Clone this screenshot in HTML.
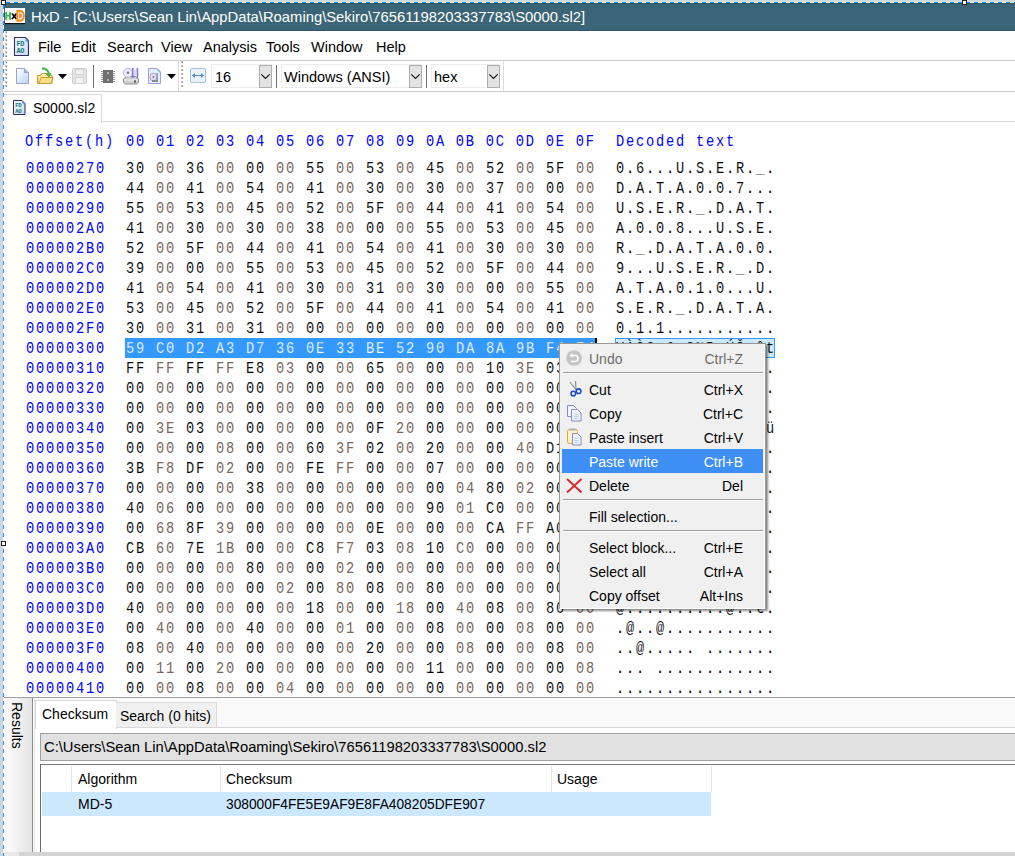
<!DOCTYPE html>
<html><head><meta charset="utf-8">
<style>
html,body{margin:0;padding:0}
body{width:1015px;height:856px;overflow:hidden;position:relative;background:#fff;font-family:"Liberation Sans",sans-serif;color:#000}
.abs{position:absolute}
.ui{position:absolute;font-family:"Liberation Sans",sans-serif;font-size:14.5px;line-height:20px;white-space:pre}
.mono{position:absolute;font-family:"Liberation Mono",monospace;font-size:16.667px;line-height:20px;white-space:pre;color:#000;-webkit-text-stroke:0.1px #fff;letter-spacing:2.195px;transform:scaleX(0.82);transform-origin:0 0;margin-left:1px}
.hdr,.off{color:#0000ff;-webkit-text-stroke:0}
.od{color:#7a675c;-webkit-text-stroke:0}
.ev{color:#000}
.dot{-webkit-text-stroke:0}
.sel{color:#fff;-webkit-text-stroke:0.25px #3399ff}
.mi{font-size:14px}
</style></head><body>
<!-- outer bg & dashed selection border -->
<div class="abs" style="left:0;top:0;width:1015px;height:2px;background:#d3d8df"></div>
<div class="abs" style="left:0;top:0;width:3px;height:856px;background:#cfd5de"></div>
<!-- title bar -->
<div class="abs" style="left:4px;top:3px;width:1011px;height:28px;background:#3b6576"></div>
<div class="ui" style="left:31px;top:7px;font-size:14.8px;color:#fff">HxD - [C:\Users\Sean Lin\AppData\Roaming\Sekiro\76561198203337783\S0000.sl2]</div>
<!-- menu bar -->
<div class="abs" style="left:4px;top:60px;width:1011px;height:1px;background:#cdcdcd"></div>
<div class="abs" style="left:4px;top:30px;width:1011px;height:1px;background:#2f5665"></div>
<div class="abs" style="left:4px;top:3px;width:1011px;height:1px;background:#2d5667"></div>
<div class="ui" style="left:38px;top:37px">File</div>
<div class="ui" style="left:71px;top:37px">Edit</div>
<div class="ui" style="left:107px;top:37px">Search</div>
<div class="ui" style="left:161px;top:37px">View</div>
<div class="ui" style="left:203px;top:37px">Analysis</div>
<div class="ui" style="left:266px;top:37px">Tools</div>
<div class="ui" style="left:311px;top:37px">Window</div>
<div class="ui" style="left:376px;top:37px">Help</div>
<!-- toolbar -->
<div class="abs" style="left:4px;top:91px;width:1011px;height:1px;background:#cdcdcd"></div>
<!-- combos -->
<div class="abs" style="left:211px;top:64px;width:59px;height:22px;border:1px solid #ececec;background:#fff"></div>
<div class="abs" style="left:259px;top:65px;width:11px;height:21px;border:1px solid #adadad;background:#e3e3e3"></div>
<div class="ui" style="left:215px;top:67px">16</div>
<div class="abs" style="left:276px;top:65px;width:1px;height:23px;background:#6e6e6e"></div>
<div class="abs" style="left:281px;top:64px;width:139px;height:22px;border:1px solid #ececec;background:#fff"></div>
<div class="abs" style="left:409px;top:65px;width:11px;height:21px;border:1px solid #adadad;background:#e3e3e3"></div>
<div class="ui" style="left:284px;top:67px">Windows (ANSI)</div>
<div class="abs" style="left:426px;top:65px;width:1px;height:23px;background:#6e6e6e"></div>
<div class="abs" style="left:431px;top:64px;width:67px;height:22px;border:1px solid #ececec;background:#fff"></div>
<div class="abs" style="left:487px;top:65px;width:11px;height:21px;border:1px solid #adadad;background:#e3e3e3"></div>
<div class="ui" style="left:434px;top:67px">hex</div>
<div class="abs" style="left:503px;top:61px;width:1px;height:30px;background:#dcdcdc"></div>
<div class="abs" style="left:178px;top:61px;width:1px;height:30px;background:#dcdcdc"></div>
<div class="abs" style="left:93px;top:65px;width:1px;height:23px;background:#6e6e6e"></div>
<svg class="abs" style="left:0;top:0" width="1015" height="130" viewBox="0 0 1015 130">
<defs>
<linearGradient id="gdoc" x1="0" y1="0" x2="1" y2="1"><stop offset="0" stop-color="#ffffff"/><stop offset="1" stop-color="#bcd6f2"/></linearGradient>
<linearGradient id="gfold" x1="0" y1="0" x2="0" y2="1"><stop offset="0" stop-color="#fff6c8"/><stop offset="1" stop-color="#f3cf6e"/></linearGradient>
<pattern id="grip" width="4" height="4" patternUnits="userSpaceOnUse"><rect x="0" y="1" width="2" height="2" fill="#9a9a9a"/></pattern>
</defs>
<!-- grippers -->
<rect x="5" y="31" width="2" height="2" fill="#c4c4c4"/><rect x="6" y="32" width="1" height="1" fill="#7c7c7c"/><rect x="5" y="35" width="2" height="2" fill="#c4c4c4"/><rect x="6" y="36" width="1" height="1" fill="#7c7c7c"/><rect x="5" y="39" width="2" height="2" fill="#c4c4c4"/><rect x="6" y="40" width="1" height="1" fill="#7c7c7c"/><rect x="5" y="43" width="2" height="2" fill="#c4c4c4"/><rect x="6" y="44" width="1" height="1" fill="#7c7c7c"/><rect x="5" y="47" width="2" height="2" fill="#c4c4c4"/><rect x="6" y="48" width="1" height="1" fill="#7c7c7c"/><rect x="5" y="51" width="2" height="2" fill="#c4c4c4"/><rect x="6" y="52" width="1" height="1" fill="#7c7c7c"/><rect x="5" y="55" width="2" height="2" fill="#c4c4c4"/><rect x="6" y="56" width="1" height="1" fill="#7c7c7c"/><rect x="5" y="61" width="2" height="2" fill="#c4c4c4"/><rect x="6" y="62" width="1" height="1" fill="#7c7c7c"/><rect x="5" y="65" width="2" height="2" fill="#c4c4c4"/><rect x="6" y="66" width="1" height="1" fill="#7c7c7c"/><rect x="5" y="69" width="2" height="2" fill="#c4c4c4"/><rect x="6" y="70" width="1" height="1" fill="#7c7c7c"/><rect x="5" y="73" width="2" height="2" fill="#c4c4c4"/><rect x="6" y="74" width="1" height="1" fill="#7c7c7c"/><rect x="5" y="77" width="2" height="2" fill="#c4c4c4"/><rect x="6" y="78" width="1" height="1" fill="#7c7c7c"/><rect x="5" y="81" width="2" height="2" fill="#c4c4c4"/><rect x="6" y="82" width="1" height="1" fill="#7c7c7c"/><rect x="5" y="85" width="2" height="2" fill="#c4c4c4"/><rect x="6" y="86" width="1" height="1" fill="#7c7c7c"/><rect x="181" y="61" width="2" height="2" fill="#c4c4c4"/><rect x="182" y="62" width="1" height="1" fill="#7c7c7c"/><rect x="181" y="65" width="2" height="2" fill="#c4c4c4"/><rect x="182" y="66" width="1" height="1" fill="#7c7c7c"/><rect x="181" y="69" width="2" height="2" fill="#c4c4c4"/><rect x="182" y="70" width="1" height="1" fill="#7c7c7c"/><rect x="181" y="73" width="2" height="2" fill="#c4c4c4"/><rect x="182" y="74" width="1" height="1" fill="#7c7c7c"/><rect x="181" y="77" width="2" height="2" fill="#c4c4c4"/><rect x="182" y="78" width="1" height="1" fill="#7c7c7c"/><rect x="181" y="81" width="2" height="2" fill="#c4c4c4"/><rect x="182" y="82" width="1" height="1" fill="#7c7c7c"/><rect x="181" y="85" width="2" height="2" fill="#c4c4c4"/><rect x="182" y="86" width="1" height="1" fill="#7c7c7c"/>
<!-- menu doc icon -->
<linearGradient id="gmd" x1="0" y1="0" x2="1" y2="1"><stop offset="0" stop-color="#f4f8ff"/><stop offset="1" stop-color="#c9dcf6"/></linearGradient>
<path d="M14.5 37.5 h11 l3 3 v15 h-14 z" fill="url(#gmd)" stroke="#2d2f5c" stroke-width="1.1"/>
<path d="M25.5 37.5 l3 3 v3 l-3 -3 z" fill="#5b8fe0"/>
<text x="16.6" y="46" font-family="Liberation Mono" font-size="6.8" font-weight="bold" fill="#107a78" letter-spacing="-0.3">FD</text>
<text x="16.6" y="53" font-family="Liberation Mono" font-size="6.8" font-weight="bold" fill="#107a78" letter-spacing="-0.3">AO</text>
<!-- new -->
<path d="M16.5 68.5 h8 l4 4 v11 h-12 z" fill="url(#gdoc)" stroke="#9c9fd8" stroke-width="1"/>
<path d="M24.5 68.5 v4 h4" fill="#9ec6ee" stroke="#9c9fd8" stroke-width="1"/>
<!-- open -->
<path d="M37.5 75.5 h3 l1.5 -2 h4 l1 2 h5 v8 h-14.5 z" fill="url(#gfold)" stroke="#d39a2c" stroke-width="1"/>
<path d="M39 83.5 l2 -6 h12 l-2 6 z" fill="#f9df8a" stroke="#d39a2c" stroke-width="1"/>
<path d="M42 68.5 q5 -0.5 7 5" fill="none" stroke="#3cb43c" stroke-width="2"/>
<path d="M45.5 73 l6 0 l-2.5 5 z" fill="#46bf46"/>
<path d="M58 74 h9 l-4.5 5 z" fill="#000"/>
<!-- save disabled -->
<rect x="72.5" y="68.5" width="14" height="15" rx="1.5" fill="#e6e6e6" stroke="#cfcfcf"/>
<rect x="75.5" y="69.5" width="8" height="5" fill="#f2f2f2" stroke="#d4d4d4"/>
<rect x="75.5" y="77.5" width="8" height="6" fill="#f4f4f4" stroke="#d4d4d4"/>
<!-- chip -->
<rect x="103" y="70" width="10" height="13" fill="#6f6f6f"/>
<path d="M101 71.5 h2 M101 73.5 h2 M101 75.5 h2 M101 77.5 h2 M101 79.5 h2 M101 81.5 h2 M113 71.5 h2 M113 73.5 h2 M113 75.5 h2 M113 77.5 h2 M113 79.5 h2 M113 81.5 h2" stroke="#9a9a9a" stroke-width="1"/>
<rect x="107" y="72" width="2" height="2" fill="#b0b0b0"/><rect x="107" y="79" width="2" height="2" fill="#b0b0b0"/>
<!-- drive -->
<path d="M123.5 79 l3 -2.5 h9 l3 2.5 v3.5 l-2 1.5 h-11 l-2 -1.5 z" fill="#cfcfcf" stroke="#8a8a8a" stroke-width="1"/>
<path d="M124 80 h14" stroke="#f4f4f4" stroke-width="1"/>
<rect x="134" y="80.5" width="2" height="2" fill="#555"/>
<circle cx="128" cy="72.8" r="4.6" fill="#eceaf8" stroke="#b9b4dc" stroke-width="1"/>
<circle cx="128" cy="72.8" r="1.2" fill="#707070"/>
<rect x="132" y="68" width="1.6" height="10" fill="#7a72d8"/>
<rect x="136.6" y="68" width="1.6" height="10" fill="#7a72d8"/>
<rect x="133.6" y="70" width="3" height="6" fill="#ddd9f2"/>
<!-- doc disk -->
<path d="M148.5 68.5 h8.5 l3.5 3.5 v11.5 h-12 z" fill="#e2f0fb" stroke="#9f9ee0" stroke-width="1"/>
<path d="M157 68.5 l3.5 3.5 v1.5 l-3.5 -3.5 z" fill="#62b0f0"/>
<circle cx="153.5" cy="77" r="3.8" fill="#e0ddea" stroke="#aaa5cc" stroke-width="1"/>
<circle cx="153.5" cy="77" r="0.9" fill="#777"/>
<rect x="156.5" y="73" width="1.3" height="7" fill="#8d86d8"/>
<rect x="152" y="80" width="6" height="2" fill="#8a8a8a"/>
<path d="M167 74 h9 l-4.5 5 z" fill="#000"/>
<!-- width icon -->
<rect x="190.5" y="68.5" width="15" height="14" rx="1.5" fill="#eaf2fb" stroke="#a6c0de" stroke-width="1"/>
<path d="M192.5 75.5 h11" stroke="#5b86c3" stroke-width="1"/>
<path d="M192 75.5 l3 -2.5 v5 z M204 75.5 l-3 -2.5 v5 z" fill="#5b86c3"/>
<!-- chevrons -->
<path d="M261.3 74.3 l4.2 4.2 l4.2 -4.2" fill="none" stroke="#111" stroke-width="1.1"/>
<path d="M411.3 74.3 l4.2 4.2 l4.2 -4.2" fill="none" stroke="#111" stroke-width="1.1"/>
<path d="M489.3 74.3 l4.2 4.2 l4.2 -4.2" fill="none" stroke="#111" stroke-width="1.1"/>
<!-- title icon -->
<rect x="5" y="8" width="20" height="15" fill="#fff"/>
<rect x="5" y="23" width="20" height="1.2" fill="#111"/>
<path d="M5.2 12 h2 v7.8 h-2 z M9 12 h2 v7.8 h-2 z M6.5 15 h3.5 v1.6 h-3.5 z" fill="#3fb64e"/>
<path d="M12 13.5 L16.5 19 M16.5 13.5 L12 19" stroke="#000" stroke-width="1.8"/>
<path d="M16.3 10 h4.2 a4.3 5.8 0 0 1 0 11.7 h-4.2 z" fill="#f08a14"/>
<path d="M18.2 12.3 h2.2 a2.6 3.5 0 0 1 0 7.1 h-2.2 z" fill="#eaf2fb"/>
<path d="M19.2 13.6 h1.2 a1.6 2.2 0 0 1 0 4.4 h-1.2 z" fill="#f58a1c"/>
</svg>
<!-- tab -->
<div class="abs" style="left:4px;top:94px;width:97px;height:28px;border-top:1px solid #d9d9d9;border-right:1px solid #d9d9d9;background:#fff"></div>
<div class="abs" style="left:101px;top:121px;width:914px;height:1px;background:#d9d9d9"></div>
<div class="ui" style="left:33px;top:98px;font-size:14px">S0000.sl2</div>
<svg class="abs" style="left:0;top:0" width="130" height="130" viewBox="0 0 130 130"><!-- tab icon -->
<path d="M13.5 100.5 h8.5 l3 3 v11 h-11.5 z" fill="url(#gtab)" stroke="#2d2f5c" stroke-width="1"/>
<linearGradient id="gtab" x1="0" y1="0" x2="1" y2="1"><stop offset="0" stop-color="#f4f8ff"/><stop offset="1" stop-color="#c9dcf6"/></linearGradient>
<path d="M22 100.5 l3 3 v2 l-3 -3 z" fill="#5b8fe0"/>
<text x="15.2" y="107.3" font-family="Liberation Mono" font-size="5.6" font-weight="bold" fill="#107a78" letter-spacing="-0.2">FD</text>
<text x="15.2" y="113" font-family="Liberation Mono" font-size="5.6" font-weight="bold" fill="#107a78" letter-spacing="-0.2">AO</text>
</svg>
<!-- hex -->
<div class="mono hdr" style="left:24px;top:132px">Offset(h)</div>
<div class="mono hdr" style="left:125px;top:132px">00 01 02 03 04 05 06 07 08 09 0A 0B 0C 0D 0E 0F</div>
<div class="mono hdr" style="left:615px;top:132px">Decoded text</div>
<div class="mono off" style="left:25px;top:159px">00000270</div>
<div class="mono" style="left:125px;top:159px"><span class="ev">30</span> <span class="od">00</span> <span class="ev">36</span> <span class="od">00</span> <span class="ev">00</span> <span class="od">00</span> <span class="ev">55</span> <span class="od">00</span> <span class="ev">53</span> <span class="od">00</span> <span class="ev">45</span> <span class="od">00</span> <span class="ev">52</span> <span class="od">00</span> <span class="ev">5F</span> <span class="od">00</span></div>
<div class="mono" style="left:615px;top:159px">0<span class="dot">.</span>6<span class="dot">...</span>U<span class="dot">.</span>S<span class="dot">.</span>E<span class="dot">.</span>R<span class="dot">.</span>_<span class="dot">.</span></div>
<div class="mono off" style="left:25px;top:179px">00000280</div>
<div class="mono" style="left:125px;top:179px"><span class="ev">44</span> <span class="od">00</span> <span class="ev">41</span> <span class="od">00</span> <span class="ev">54</span> <span class="od">00</span> <span class="ev">41</span> <span class="od">00</span> <span class="ev">30</span> <span class="od">00</span> <span class="ev">30</span> <span class="od">00</span> <span class="ev">37</span> <span class="od">00</span> <span class="ev">00</span> <span class="od">00</span></div>
<div class="mono" style="left:615px;top:179px">D<span class="dot">.</span>A<span class="dot">.</span>T<span class="dot">.</span>A<span class="dot">.</span>0<span class="dot">.</span>0<span class="dot">.</span>7<span class="dot">...</span></div>
<div class="mono off" style="left:25px;top:199px">00000290</div>
<div class="mono" style="left:125px;top:199px"><span class="ev">55</span> <span class="od">00</span> <span class="ev">53</span> <span class="od">00</span> <span class="ev">45</span> <span class="od">00</span> <span class="ev">52</span> <span class="od">00</span> <span class="ev">5F</span> <span class="od">00</span> <span class="ev">44</span> <span class="od">00</span> <span class="ev">41</span> <span class="od">00</span> <span class="ev">54</span> <span class="od">00</span></div>
<div class="mono" style="left:615px;top:199px">U<span class="dot">.</span>S<span class="dot">.</span>E<span class="dot">.</span>R<span class="dot">.</span>_<span class="dot">.</span>D<span class="dot">.</span>A<span class="dot">.</span>T<span class="dot">.</span></div>
<div class="mono off" style="left:25px;top:219px">000002A0</div>
<div class="mono" style="left:125px;top:219px"><span class="ev">41</span> <span class="od">00</span> <span class="ev">30</span> <span class="od">00</span> <span class="ev">30</span> <span class="od">00</span> <span class="ev">38</span> <span class="od">00</span> <span class="ev">00</span> <span class="od">00</span> <span class="ev">55</span> <span class="od">00</span> <span class="ev">53</span> <span class="od">00</span> <span class="ev">45</span> <span class="od">00</span></div>
<div class="mono" style="left:615px;top:219px">A<span class="dot">.</span>0<span class="dot">.</span>0<span class="dot">.</span>8<span class="dot">...</span>U<span class="dot">.</span>S<span class="dot">.</span>E<span class="dot">.</span></div>
<div class="mono off" style="left:25px;top:239px">000002B0</div>
<div class="mono" style="left:125px;top:239px"><span class="ev">52</span> <span class="od">00</span> <span class="ev">5F</span> <span class="od">00</span> <span class="ev">44</span> <span class="od">00</span> <span class="ev">41</span> <span class="od">00</span> <span class="ev">54</span> <span class="od">00</span> <span class="ev">41</span> <span class="od">00</span> <span class="ev">30</span> <span class="od">00</span> <span class="ev">30</span> <span class="od">00</span></div>
<div class="mono" style="left:615px;top:239px">R<span class="dot">.</span>_<span class="dot">.</span>D<span class="dot">.</span>A<span class="dot">.</span>T<span class="dot">.</span>A<span class="dot">.</span>0<span class="dot">.</span>0<span class="dot">.</span></div>
<div class="mono off" style="left:25px;top:259px">000002C0</div>
<div class="mono" style="left:125px;top:259px"><span class="ev">39</span> <span class="od">00</span> <span class="ev">00</span> <span class="od">00</span> <span class="ev">55</span> <span class="od">00</span> <span class="ev">53</span> <span class="od">00</span> <span class="ev">45</span> <span class="od">00</span> <span class="ev">52</span> <span class="od">00</span> <span class="ev">5F</span> <span class="od">00</span> <span class="ev">44</span> <span class="od">00</span></div>
<div class="mono" style="left:615px;top:259px">9<span class="dot">...</span>U<span class="dot">.</span>S<span class="dot">.</span>E<span class="dot">.</span>R<span class="dot">.</span>_<span class="dot">.</span>D<span class="dot">.</span></div>
<div class="mono off" style="left:25px;top:279px">000002D0</div>
<div class="mono" style="left:125px;top:279px"><span class="ev">41</span> <span class="od">00</span> <span class="ev">54</span> <span class="od">00</span> <span class="ev">41</span> <span class="od">00</span> <span class="ev">30</span> <span class="od">00</span> <span class="ev">31</span> <span class="od">00</span> <span class="ev">30</span> <span class="od">00</span> <span class="ev">00</span> <span class="od">00</span> <span class="ev">55</span> <span class="od">00</span></div>
<div class="mono" style="left:615px;top:279px">A<span class="dot">.</span>T<span class="dot">.</span>A<span class="dot">.</span>0<span class="dot">.</span>1<span class="dot">.</span>0<span class="dot">...</span>U<span class="dot">.</span></div>
<div class="mono off" style="left:25px;top:299px">000002E0</div>
<div class="mono" style="left:125px;top:299px"><span class="ev">53</span> <span class="od">00</span> <span class="ev">45</span> <span class="od">00</span> <span class="ev">52</span> <span class="od">00</span> <span class="ev">5F</span> <span class="od">00</span> <span class="ev">44</span> <span class="od">00</span> <span class="ev">41</span> <span class="od">00</span> <span class="ev">54</span> <span class="od">00</span> <span class="ev">41</span> <span class="od">00</span></div>
<div class="mono" style="left:615px;top:299px">S<span class="dot">.</span>E<span class="dot">.</span>R<span class="dot">.</span>_<span class="dot">.</span>D<span class="dot">.</span>A<span class="dot">.</span>T<span class="dot">.</span>A<span class="dot">.</span></div>
<div class="mono off" style="left:25px;top:319px">000002F0</div>
<div class="mono" style="left:125px;top:319px"><span class="ev">30</span> <span class="od">00</span> <span class="ev">31</span> <span class="od">00</span> <span class="ev">31</span> <span class="od">00</span> <span class="ev">00</span> <span class="od">00</span> <span class="ev">00</span> <span class="od">00</span> <span class="ev">00</span> <span class="od">00</span> <span class="ev">00</span> <span class="od">00</span> <span class="ev">00</span> <span class="od">00</span></div>
<div class="mono" style="left:615px;top:319px">0<span class="dot">.</span>1<span class="dot">.</span>1<span class="dot">...........</span></div>
<div class="abs" style="left:125px;top:338px;width:470px;height:20px;background:#3399ff"></div>
<div class="abs" style="left:595px;top:338px;width:2px;height:20px;background:#000"></div>
<div class="abs" style="left:615px;top:338px;width:158px;height:18px;background:#cce8ff;border:1px solid #3399ff"></div>
<div class="mono off" style="left:25px;top:339px">00000300</div>
<div class="mono" style="left:125px;top:339px"><span class="sel">59</span> <span class="sel">C0</span> <span class="sel">D2</span> <span class="sel">A3</span> <span class="sel">D7</span> <span class="sel">36</span> <span class="sel">0E</span> <span class="sel">33</span> <span class="sel">BE</span> <span class="sel">52</span> <span class="sel">90</span> <span class="sel">DA</span> <span class="sel">8A</span> <span class="sel">9B</span> <span class="sel">F4</span> <span class="sel">74</span></div>
<div class="mono" style="left:615px;top:339px">YÀÒ£×6<span class="dot">.</span>3¾R<span class="dot">.</span>ÚŠ›ôt</div>
<div class="mono off" style="left:25px;top:359px">00000310</div>
<div class="mono" style="left:125px;top:359px"><span class="ev">FF</span> <span class="od">FF</span> <span class="ev">FF</span> <span class="od">FF</span> <span class="ev">E8</span> <span class="od">03</span> <span class="ev">00</span> <span class="od">00</span> <span class="ev">65</span> <span class="od">00</span> <span class="ev">00</span> <span class="od">00</span> <span class="ev">10</span> <span class="od">3E</span> <span class="ev">03</span> <span class="od">00</span></div>
<div class="mono" style="left:615px;top:359px">ÿÿÿÿè<span class="dot">...</span>e<span class="dot">....</span>&gt;<span class="dot">..</span></div>
<div class="mono off" style="left:25px;top:379px">00000320</div>
<div class="mono" style="left:125px;top:379px"><span class="ev">00</span> <span class="od">00</span> <span class="ev">00</span> <span class="od">00</span> <span class="ev">00</span> <span class="od">00</span> <span class="ev">00</span> <span class="od">00</span> <span class="ev">00</span> <span class="od">00</span> <span class="ev">00</span> <span class="od">00</span> <span class="ev">00</span> <span class="od">00</span> <span class="ev">00</span> <span class="od">00</span></div>
<div class="mono" style="left:615px;top:379px"><span class="dot">................</span></div>
<div class="mono off" style="left:25px;top:399px">00000330</div>
<div class="mono" style="left:125px;top:399px"><span class="ev">00</span> <span class="od">00</span> <span class="ev">00</span> <span class="od">00</span> <span class="ev">00</span> <span class="od">00</span> <span class="ev">00</span> <span class="od">00</span> <span class="ev">00</span> <span class="od">00</span> <span class="ev">00</span> <span class="od">00</span> <span class="ev">00</span> <span class="od">00</span> <span class="ev">00</span> <span class="od">00</span></div>
<div class="mono" style="left:615px;top:399px"><span class="dot">................</span></div>
<div class="mono off" style="left:25px;top:419px">00000340</div>
<div class="mono" style="left:125px;top:419px"><span class="ev">00</span> <span class="od">3E</span> <span class="ev">03</span> <span class="od">00</span> <span class="ev">00</span> <span class="od">00</span> <span class="ev">00</span> <span class="od">00</span> <span class="ev">0F</span> <span class="od">20</span> <span class="ev">00</span> <span class="od">00</span> <span class="ev">00</span> <span class="od">00</span> <span class="ev">00</span> <span class="od">FC</span></div>
<div class="mono" style="left:615px;top:419px"><span class="dot">.</span>&gt;<span class="dot">......</span> <span class="dot">......</span>ü</div>
<div class="mono off" style="left:25px;top:439px">00000350</div>
<div class="mono" style="left:125px;top:439px"><span class="ev">00</span> <span class="od">00</span> <span class="ev">00</span> <span class="od">08</span> <span class="ev">00</span> <span class="od">00</span> <span class="ev">60</span> <span class="od">3F</span> <span class="ev">02</span> <span class="od">00</span> <span class="ev">20</span> <span class="od">00</span> <span class="ev">00</span> <span class="od">40</span> <span class="ev">D1</span> <span class="od">00</span></div>
<div class="mono" style="left:615px;top:439px"><span class="dot">......</span>`?<span class="dot">..</span> <span class="dot">..</span>@Ñ<span class="dot">.</span></div>
<div class="mono off" style="left:25px;top:459px">00000360</div>
<div class="mono" style="left:125px;top:459px"><span class="ev">3B</span> <span class="od">F8</span> <span class="ev">DF</span> <span class="od">02</span> <span class="ev">00</span> <span class="od">00</span> <span class="ev">FE</span> <span class="od">FF</span> <span class="ev">00</span> <span class="od">00</span> <span class="ev">07</span> <span class="od">00</span> <span class="ev">00</span> <span class="od">00</span> <span class="ev">00</span> <span class="od">00</span></div>
<div class="mono" style="left:615px;top:459px">;øß<span class="dot">...</span>þÿ<span class="dot">........</span></div>
<div class="mono off" style="left:25px;top:479px">00000370</div>
<div class="mono" style="left:125px;top:479px"><span class="ev">00</span> <span class="od">00</span> <span class="ev">00</span> <span class="od">00</span> <span class="ev">38</span> <span class="od">00</span> <span class="ev">00</span> <span class="od">00</span> <span class="ev">00</span> <span class="od">00</span> <span class="ev">00</span> <span class="od">04</span> <span class="ev">80</span> <span class="od">02</span> <span class="ev">00</span> <span class="od">00</span></div>
<div class="mono" style="left:615px;top:479px"><span class="dot">....</span>8<span class="dot">.......</span>€<span class="dot">...</span></div>
<div class="mono off" style="left:25px;top:499px">00000380</div>
<div class="mono" style="left:125px;top:499px"><span class="ev">40</span> <span class="od">06</span> <span class="ev">00</span> <span class="od">00</span> <span class="ev">00</span> <span class="od">00</span> <span class="ev">00</span> <span class="od">00</span> <span class="ev">00</span> <span class="od">00</span> <span class="ev">90</span> <span class="od">01</span> <span class="ev">C0</span> <span class="od">00</span> <span class="ev">00</span> <span class="od">00</span></div>
<div class="mono" style="left:615px;top:499px">@<span class="dot">.........</span>À<span class="dot">.....</span></div>
<div class="mono off" style="left:25px;top:519px">00000390</div>
<div class="mono" style="left:125px;top:519px"><span class="ev">00</span> <span class="od">68</span> <span class="ev">8F</span> <span class="od">39</span> <span class="ev">00</span> <span class="od">00</span> <span class="ev">00</span> <span class="od">00</span> <span class="ev">0E</span> <span class="od">00</span> <span class="ev">00</span> <span class="od">00</span> <span class="ev">CA</span> <span class="od">FF</span> <span class="ev">A0</span> <span class="od">00</span></div>
<div class="mono" style="left:615px;top:519px"><span class="dot">.</span>h<span class="dot">.</span>9<span class="dot">........</span>Êÿ <span class="dot">.</span></div>
<div class="mono off" style="left:25px;top:539px">000003A0</div>
<div class="mono" style="left:125px;top:539px"><span class="ev">CB</span> <span class="od">60</span> <span class="ev">7E</span> <span class="od">1B</span> <span class="ev">00</span> <span class="od">00</span> <span class="ev">C8</span> <span class="od">F7</span> <span class="ev">03</span> <span class="od">08</span> <span class="ev">10</span> <span class="od">C0</span> <span class="ev">00</span> <span class="od">00</span> <span class="ev">00</span> <span class="od">00</span></div>
<div class="mono" style="left:615px;top:539px">Ë`~<span class="dot">...</span>È÷<span class="dot">...</span>À<span class="dot">....</span></div>
<div class="mono off" style="left:25px;top:559px">000003B0</div>
<div class="mono" style="left:125px;top:559px"><span class="ev">00</span> <span class="od">00</span> <span class="ev">00</span> <span class="od">00</span> <span class="ev">80</span> <span class="od">00</span> <span class="ev">00</span> <span class="od">02</span> <span class="ev">00</span> <span class="od">00</span> <span class="ev">00</span> <span class="od">00</span> <span class="ev">00</span> <span class="od">00</span> <span class="ev">00</span> <span class="od">00</span></div>
<div class="mono" style="left:615px;top:559px"><span class="dot">....</span>€<span class="dot">...........</span></div>
<div class="mono off" style="left:25px;top:579px">000003C0</div>
<div class="mono" style="left:125px;top:579px"><span class="ev">00</span> <span class="od">00</span> <span class="ev">00</span> <span class="od">00</span> <span class="ev">00</span> <span class="od">02</span> <span class="ev">00</span> <span class="od">80</span> <span class="ev">08</span> <span class="od">00</span> <span class="ev">80</span> <span class="od">00</span> <span class="ev">00</span> <span class="od">00</span> <span class="ev">00</span> <span class="od">00</span></div>
<div class="mono" style="left:615px;top:579px"><span class="dot">.......</span>€<span class="dot">..</span>€<span class="dot">.....</span></div>
<div class="mono off" style="left:25px;top:599px">000003D0</div>
<div class="mono" style="left:125px;top:599px"><span class="ev">40</span> <span class="od">00</span> <span class="ev">00</span> <span class="od">00</span> <span class="ev">00</span> <span class="od">00</span> <span class="ev">18</span> <span class="od">00</span> <span class="ev">00</span> <span class="od">18</span> <span class="ev">00</span> <span class="od">40</span> <span class="ev">08</span> <span class="od">00</span> <span class="ev">80</span> <span class="od">00</span></div>
<div class="mono" style="left:615px;top:599px">@<span class="dot">..........</span>@<span class="dot">..</span>€<span class="dot">.</span></div>
<div class="mono off" style="left:25px;top:619px">000003E0</div>
<div class="mono" style="left:125px;top:619px"><span class="ev">00</span> <span class="od">40</span> <span class="ev">00</span> <span class="od">00</span> <span class="ev">40</span> <span class="od">00</span> <span class="ev">00</span> <span class="od">01</span> <span class="ev">00</span> <span class="od">00</span> <span class="ev">08</span> <span class="od">00</span> <span class="ev">00</span> <span class="od">08</span> <span class="ev">00</span> <span class="od">00</span></div>
<div class="mono" style="left:615px;top:619px"><span class="dot">.</span>@<span class="dot">..</span>@<span class="dot">...........</span></div>
<div class="mono off" style="left:25px;top:639px">000003F0</div>
<div class="mono" style="left:125px;top:639px"><span class="ev">08</span> <span class="od">00</span> <span class="ev">40</span> <span class="od">00</span> <span class="ev">00</span> <span class="od">00</span> <span class="ev">00</span> <span class="od">00</span> <span class="ev">20</span> <span class="od">00</span> <span class="ev">00</span> <span class="od">08</span> <span class="ev">00</span> <span class="od">00</span> <span class="ev">08</span> <span class="od">00</span></div>
<div class="mono" style="left:615px;top:639px"><span class="dot">..</span>@<span class="dot">.....</span> <span class="dot">.......</span></div>
<div class="mono off" style="left:25px;top:659px">00000400</div>
<div class="mono" style="left:125px;top:659px"><span class="ev">00</span> <span class="od">11</span> <span class="ev">00</span> <span class="od">20</span> <span class="ev">00</span> <span class="od">00</span> <span class="ev">00</span> <span class="od">00</span> <span class="ev">00</span> <span class="od">00</span> <span class="ev">11</span> <span class="od">00</span> <span class="ev">00</span> <span class="od">00</span> <span class="ev">00</span> <span class="od">08</span></div>
<div class="mono" style="left:615px;top:659px"><span class="dot">...</span> <span class="dot">............</span></div>
<div class="mono off" style="left:25px;top:679px">00000410</div>
<div class="mono" style="left:125px;top:679px"><span class="ev">00</span> <span class="od">00</span> <span class="ev">08</span> <span class="od">00</span> <span class="ev">00</span> <span class="od">04</span> <span class="ev">00</span> <span class="od">00</span> <span class="ev">00</span> <span class="od">00</span> <span class="ev">00</span> <span class="od">00</span> <span class="ev">00</span> <span class="od">00</span> <span class="ev">00</span> <span class="od">00</span></div>
<div class="mono" style="left:615px;top:679px"><span class="dot">................</span></div>
<!-- hex bottom line -->
<div class="abs" style="left:4px;top:697px;width:1011px;height:1px;background:#a0a0a0"></div>
<!-- results panel -->
<div class="abs" style="left:4px;top:698px;width:1011px;height:154px;background:#fff"></div>
<div class="abs" style="left:4px;top:698px;width:28px;height:154px;background:linear-gradient(90deg,#ffffff,#e3e3e3)"></div>
<div class="abs" style="left:32px;top:698px;width:1px;height:154px;background:#8c8c8c"></div>
<div class="abs" style="left:34px;top:698px;width:1px;height:154px;background:#e8e8e8"></div>
<div class="ui" style="left:-6px;top:715px;width:46px;transform:rotate(90deg);transform-origin:center;font-size:14px;text-align:center">Results</div>
<div class="abs" style="left:35px;top:698px;width:980px;height:29px;background:#f9f9f9"></div>
<div class="abs" style="left:35px;top:727px;width:980px;height:1px;background:#d6d6d6"></div>
<div class="abs" style="left:35px;top:700px;width:80px;height:28px;border:1px solid #d9d9d9;border-bottom:none;background:#fff"></div>
<div class="abs" style="left:116px;top:702px;width:100px;height:24px;border:1px solid #d9d9d9;border-left:none;background:#f0f0f0"></div>
<div class="ui mi" style="left:42px;top:704px">Checksum</div>
<div class="ui mi" style="left:120px;top:706px">Search (0 hits)</div>
<div class="abs" style="left:40px;top:733px;width:975px;height:26px;border-top:1px solid #a0a0a0;border-bottom:1px solid #a0a0a0;border-left:1px solid #a0a0a0;background:#e1e1e1"></div>
<div class="ui mi" style="left:44px;top:737px;font-size:14.75px">C:\Users\Sean Lin\AppData\Roaming\Sekiro\76561198203337783\S0000.sl2</div>
<div class="abs" style="left:40px;top:764px;width:975px;height:88px;border-top:1px solid #7a7a7a;border-left:1px solid #6a6a6a;background:#fff"></div>
<div class="abs" style="left:71px;top:766px;width:1px;height:26px;background:#e5e5e5"></div>
<div class="abs" style="left:220px;top:766px;width:1px;height:26px;background:#e5e5e5"></div>
<div class="abs" style="left:551px;top:766px;width:1px;height:26px;background:#e5e5e5"></div>
<div class="abs" style="left:711px;top:766px;width:1px;height:26px;background:#e5e5e5"></div>
<div class="abs" style="left:42px;top:792px;width:669px;height:24px;background:#cce8ff"></div>
<div class="ui mi" style="left:78px;top:769px">Algorithm</div>
<div class="ui mi" style="left:226px;top:769px">Checksum</div>
<div class="ui mi" style="left:557px;top:769px">Usage</div>
<div class="ui mi" style="left:78px;top:794px">MD-5</div>
<div class="ui mi" style="left:226px;top:795px;font-size:13.75px">308000F4FE5E9AF9E8FA408205DFE907</div>
<div class="abs" style="left:4px;top:852px;width:15px;height:4px;background:#e8e8e8"></div>
<div class="abs" style="left:19px;top:852px;width:996px;height:4px;background:#d4d4d4"></div>

<!-- context menu -->
<div class="abs" style="left:559px;top:343px;width:205px;height:264px;border:1px solid #979797;background:#f0f0f0;box-shadow:2px 2px 2px rgba(0,0,0,0.45)"></div>
<div class="abs" style="left:560px;top:344px;width:204px;height:264px;border-right:1px solid #fff;border-bottom:1px solid #fff"></div>
<div class="abs" style="left:562px;top:449px;width:201px;height:24px;background:#3d8ff5"></div>
<div class="abs" style="left:563px;top:372px;width:200px;height:1px;background:#a0a0a0"></div>
<div class="abs" style="left:563px;top:373px;width:200px;height:1px;background:#fff"></div>
<div class="abs" style="left:563px;top:499px;width:200px;height:1px;background:#a0a0a0"></div>
<div class="abs" style="left:563px;top:500px;width:200px;height:1px;background:#fff"></div>
<div class="abs" style="left:563px;top:530px;width:200px;height:1px;background:#a0a0a0"></div>
<div class="abs" style="left:563px;top:531px;width:200px;height:1px;background:#fff"></div>
<div class="ui mi" style="left:589px;top:349px;color:#6d6d6d">Undo</div>
<div class="ui mi" style="left:643px;width:100px;text-align:right;top:349px;color:#6d6d6d">Ctrl+Z</div>
<div class="ui mi" style="left:589px;top:380px;color:#000">Cut</div>
<div class="ui mi" style="left:643px;width:100px;text-align:right;top:380px;color:#000">Ctrl+X</div>
<div class="ui mi" style="left:589px;top:404px;color:#000">Copy</div>
<div class="ui mi" style="left:643px;width:100px;text-align:right;top:404px;color:#000">Ctrl+C</div>
<div class="ui mi" style="left:589px;top:428px;color:#000">Paste insert</div>
<div class="ui mi" style="left:643px;width:100px;text-align:right;top:428px;color:#000">Ctrl+V</div>
<div class="ui mi" style="left:589px;top:452px;color:#fff">Paste write</div>
<div class="ui mi" style="left:643px;width:100px;text-align:right;top:452px;color:#fff">Ctrl+B</div>
<div class="ui mi" style="left:589px;top:476px;color:#000">Delete</div>
<div class="ui mi" style="left:643px;width:100px;text-align:right;top:476px;color:#000">Del</div>
<div class="ui mi" style="left:589px;top:507px;color:#000">Fill selection...</div>
<div class="ui mi" style="left:589px;top:538px;color:#000">Select block...</div>
<div class="ui mi" style="left:643px;width:100px;text-align:right;top:538px;color:#000">Ctrl+E</div>
<div class="ui mi" style="left:589px;top:562px;color:#000">Select all</div>
<div class="ui mi" style="left:643px;width:100px;text-align:right;top:562px;color:#000">Ctrl+A</div>
<div class="ui mi" style="left:589px;top:586px;color:#000">Copy offset</div>
<div class="ui mi" style="left:643px;width:100px;text-align:right;top:586px;color:#000">Alt+Ins</div>
<svg class="abs" style="left:0;top:0" width="1015" height="856" viewBox="0 0 1015 856">
<!-- undo -->
<circle cx="574" cy="358" r="7.8" fill="#c4c4c4"/>
<path d="M571.5 355.5 h3.5 a3 3 0 0 1 0 6 h-4" fill="none" stroke="#fff" stroke-width="1.6"/>
<path d="M569.5 355.5 l3 -2.5 v5 z" fill="#fff"/>
<!-- cut -->
<path d="M570 382 L576.5 390.5 M575.5 381 L576 390" stroke="#8a8a9a" stroke-width="1.2" fill="none"/>
<path d="M571.5 383 L575.5 388" stroke="#c8c8d0" stroke-width="1" fill="none"/>
<circle cx="573.3" cy="393.6" r="2.3" fill="none" stroke="#1f4fc8" stroke-width="1.6"/>
<circle cx="578.6" cy="391.2" r="2.3" fill="none" stroke="#1f4fc8" stroke-width="1.6"/>
<!-- copy -->
<path d="M567.5 405.5 h6 l3 3 v8 h-9 z" fill="#f3f5fc" stroke="#8a8ac4" stroke-width="1"/>
<path d="M571.5 409.5 h6 l3.5 3.5 v8 h-9.5 z" fill="#eef3fb" stroke="#8a8ac4" stroke-width="1"/>
<path d="M573.5 414.5 h5 M573.5 416.5 h5 M573.5 418.5 h5" stroke="#b9d3ee" stroke-width="1"/>
<!-- paste -->
<rect x="567.5" y="429.5" width="10" height="14" rx="2" fill="#fdf2c9" stroke="#e6a53c" stroke-width="1"/>
<rect x="569.5" y="428.5" width="6" height="2" fill="#a8a8a8"/>
<path d="M572.5 433.5 h5 l3.5 3.5 v8 h-8.5 z" fill="#eef3fb" stroke="#8a8ac4" stroke-width="1"/>
<path d="M574.5 438.5 h4 M574.5 440.5 h4 M574.5 442.5 h4" stroke="#b9d3ee" stroke-width="1"/>
<!-- delete -->
<path d="M567 479 L581.5 492.5 M581.5 479 L567 492.5" stroke="#d42a2a" stroke-width="1.9" fill="none"/>
</svg>
<!-- dashed border -->
<div class="abs" style="left:3px;top:2px;width:1012px;height:1px;background:repeating-linear-gradient(90deg,#fff 0 3px,#1e8fff 3px 7px,#fff 7px 8px)"></div>
<div class="abs" style="left:3px;top:2px;width:1px;height:854px;background:repeating-linear-gradient(180deg,#fff 0 3px,#1e8fff 3px 7px,#fff 7px 8px)"></div>
<div class="abs" style="left:962px;top:0px;width:3px;height:3px;border:1px solid #222;background:#fff"></div>
<div class="abs" style="left:1px;top:0px;width:3px;height:3px;border:1px solid #222;background:#fff"></div>
<div class="abs" style="left:1px;top:541px;width:3px;height:3px;border:1px solid #222;background:#fff"></div>
</body></html>
